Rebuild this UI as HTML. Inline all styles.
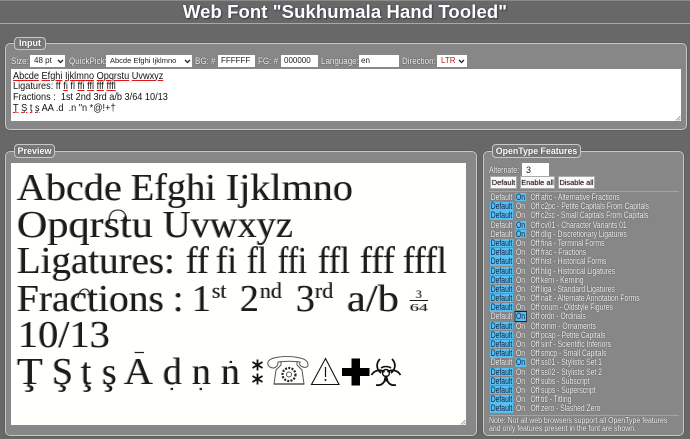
<!DOCTYPE html>
<html><head><meta charset="utf-8"><title>Web Font</title>
<style>
html{background:#686868}
html,body{margin:0;padding:0;width:690px;height:439px;overflow:hidden}
body{position:relative;font-family:"Liberation Sans",sans-serif;color:#eee;background:#686868;filter:blur(.2px)}
.a{position:absolute;white-space:nowrap}
.line{position:absolute;left:0;width:690px;background:#a8a8a4}
h1{position:absolute;left:0;top:1px;width:690px;margin:0;text-align:center;font-size:18.5px;line-height:22px;font-weight:bold;color:#fff;text-shadow:0 0 2px #223,0 0 2px #99a,1px 1px 1px #333;letter-spacing:.1px}
.fs{position:absolute;box-sizing:border-box;background:#878787;border:1px solid #c8c8c4;border-radius:5px;box-shadow:0 0 1px #333}
.lg{position:absolute;box-sizing:border-box;background:#787878;border:1px solid #c8c8c4;border-radius:4px;font-weight:bold;color:#fff;text-align:center;text-shadow:0 0 1px #333;white-space:nowrap}
.lb{position:absolute;font-size:8.800px;line-height:12px;color:#f4f4f4;text-shadow:0 0 1px #222;white-space:nowrap;transform:scaleX(.91);transform-origin:0 0}
.ctl{position:absolute;box-sizing:border-box;background:#fff;border:0;margin:0;padding:0 0 0 3px;height:12px;font:8px/12px "Liberation Sans",sans-serif;color:#222;border-radius:0;appearance:none;-webkit-appearance:none;outline:0}
.chev{position:absolute}
.ta{position:absolute;left:11px;top:69px;width:670px;height:52px;background:#fff;box-sizing:border-box;color:#111;padding:0}
.ta div{position:absolute;left:2px;top:2.500px;font-size:10.3px;line-height:10.700px;white-space:pre;transform:scaleX(.89);transform-origin:0 0}
.ta u{text-decoration:underline;text-decoration-color:#e11;text-underline-offset:1px}
.btn{position:absolute;top:176px;height:13px;box-sizing:border-box;background:#fafafa;border:1px solid #aaa;font-size:7.400px;line-height:11px;color:#111;text-align:center;padding:0;margin:0;font-family:"Liberation Sans",sans-serif;text-shadow:0 0 1px #b88;white-space:nowrap}
.hr{position:absolute;left:489px;width:190px;height:1px;background:#a4a4a2}
#rows{position:absolute;left:490px;top:193px;width:245px;font-size:8.800px;color:#f6f6f6;text-shadow:0 0 1px #222;transform:scaleX(.77);transform-origin:0 0}
.r{position:relative;height:9.2px;line-height:9.2px;white-space:nowrap}
.r span{position:absolute;top:0;height:8.4px;line-height:8.4px}
.d{left:0;width:29.900px;text-align:center}
.n{left:32.500px;width:14.300px;text-align:center}
.f{left:50.600px;width:15.600px;text-align:center}
.t{left:66.200px}
.s{background:#58bff0;color:#124;text-shadow:none}
.fo{outline:1px solid #123}
#pv{position:absolute;left:11px;top:163px;width:455px;height:262px;background:#fffffc}
</style></head><body>
<div class="line" style="top:0;height:1px;background:#8a8a86"></div>
<h1>Web Font "Sukhumala Hand Tooled"</h1>
<div class="line" style="top:23px;height:1px"></div>

<div class="fs" style="left:5px;top:43px;width:682px;height:87px"></div>
<div class="lg" style="left:14px;top:37px;width:32px;height:13px;font-size:9px;line-height:11px">Input</div>
<div class="lb" style="left:11px;top:55px">Size:</div>
<select class="ctl" style="left:30px;top:55px;width:35px;padding-left:4px"><option>48 pt</option></select>
<div class="lb" style="left:69px;top:55px">QuickPick:</div>
<select class="ctl" style="left:106px;top:55px;width:86px;padding-left:4px;font-size:7.500px"><option>Abcde Efghi Ijklmno</option></select>
<div class="lb" style="left:195px;top:55px">BG: #</div>
<input class="ctl" style="left:218px;top:55px;width:37px" value="FFFFFF">
<div class="lb" style="left:258px;top:55px">FG: #</div>
<input class="ctl" style="left:281px;top:55px;width:37px" value="000000">
<div class="lb" style="left:321px;top:55px">Language:</div>
<input class="ctl" style="left:359px;top:55px;width:40px;padding-left:2px" value="en">
<div class="lb" style="left:402px;top:55px">Direction:</div>
<select class="ctl" style="left:437px;top:55px;width:30px;color:#a22;padding-left:4px"><option>LTR</option></select>
<svg class="chev" style="left:0;top:0" width="690" height="200" fill="none" stroke="#222" stroke-width="1.3"><path d="M58 60l2.500 2.500 2.500-2.500M185 60l2.500 2.500 2.500-2.500M459 60l2.500 2.500 2.500-2.500M541 168l2.500 2.500 2.500-2.500"/></svg>
<div class="ta"><div><u>Abcde</u> <u>Efghi</u> <u>Ijklmno</u> <u>Opqrstu</u> <u>Uvwxyz</u>
Ligatures: ff <u>fi</u> fl <u>ffi</u> <u>ffl</u> <u>fff</u> <u>fffl</u>
Fractions :  1st 2nd 3rd a/b 3/64 10/13
<u>Ţ</u> <u>Ş</u> <u>ţ</u> <u>ş</u> AA .d  .n "n *@!+†</div></div>
<svg class="a" style="left:675px;top:115px" width="6" height="6" stroke="#888" stroke-width=".8"><path d="M1 5.500L5.500 1M3.500 5.500L5.500 3.500"/></svg>

<div class="fs" style="left:5px;top:151px;width:472px;height:285px"></div>
<div class="lg" style="left:14px;top:144px;width:41px;height:14px;font-size:9px;line-height:12px">Preview</div>
<div id="pv"></div>
<svg class="a" style="left:0;top:0" width="480" height="439" font-family="'Liberation Serif',serif" font-size="38" fill="#1c1c1c">
<defs><filter id="ht" x="-2%" y="-5%" width="104%" height="110%"><feOffset in="SourceAlpha" dx="-1.1" dy="0" result="o"/><feFlood flood-color="#a8a8a8"/><feComposite in2="o" operator="in" result="s"/><feMerge><feMergeNode in="s"/><feMergeNode in="SourceGraphic"/></feMerge></filter></defs>
<g filter="url(#ht)">
<text x="17" y="200" textLength="105" lengthAdjust="spacingAndGlyphs">Abcde</text>
<text x="131" y="200" textLength="85" lengthAdjust="spacingAndGlyphs">Efghi</text>
<text x="226" y="200" textLength="127" lengthAdjust="spacingAndGlyphs">Ijklmno</text>
<text x="17" y="237" textLength="136" lengthAdjust="spacingAndGlyphs">Opqrstu</text>
<text x="163" y="237" textLength="130" lengthAdjust="spacingAndGlyphs">Uvwxyz</text>
<path d="M110 224c-2-9 2-14 8-14s10 5 8 14" fill="none" stroke="#1c1c1c" stroke-width="1"/>
<text x="17" y="273" textLength="158" lengthAdjust="spacingAndGlyphs">Ligatures:</text>
<text x="186" y="273" textLength="23" lengthAdjust="spacingAndGlyphs">ff</text>
<text x="216" y="273" textLength="21" lengthAdjust="spacingAndGlyphs">fi</text>
<text x="247" y="273" textLength="20" lengthAdjust="spacingAndGlyphs">fl</text>
<text x="278" y="273" textLength="29" lengthAdjust="spacingAndGlyphs">ffi</text>
<text x="318" y="273" textLength="32" lengthAdjust="spacingAndGlyphs">ffl</text>
<text x="360" y="273" textLength="35" lengthAdjust="spacingAndGlyphs">fff</text>
<text x="403" y="273" textLength="44" lengthAdjust="spacingAndGlyphs">fffl</text>
<text x="17" y="311" textLength="147" lengthAdjust="spacingAndGlyphs">Fractions</text>
<text x="173" y="311">:</text>
<path d="M78 298c1-6 4-9 7-9s5 3 5 9" fill="none" stroke="#1c1c1c" stroke-width="1"/>
<text x="192" y="311">1</text><text x="212" y="298" font-size="22">st</text>
<text x="240" y="311">2</text><text x="260" y="298" font-size="22">nd</text>
<text x="296" y="311">3</text><text x="315" y="298" font-size="22">rd</text>
<text x="347" y="311" textLength="52" lengthAdjust="spacingAndGlyphs">a/b</text>
<text x="416" y="298" font-size="12">3</text><path d="M410 300.500h18" stroke="#1c1c1c" stroke-width="1"/><text x="410" y="311" font-size="11" textLength="18" lengthAdjust="spacingAndGlyphs">64</text>
<text x="18" y="347" textLength="92" lengthAdjust="spacingAndGlyphs">10/13</text>
<text x="17" y="384" textLength="26" lengthAdjust="spacingAndGlyphs">Ţ</text><text x="52" y="384">Ş</text><text x="81" y="384">ţ</text><text x="102" y="384">ş</text>
<text x="124" y="384" textLength="29" lengthAdjust="spacingAndGlyphs">A</text><path d="M135 352.500h9" stroke="#1c1c1c" stroke-width="1.2"/>
<text x="163" y="384">d</text><circle cx="172" cy="389" r="1.2"/>
<text x="192" y="384">n</text><circle cx="201" cy="389" r="1.2"/>
<text x="221" y="384">n</text><circle cx="231" cy="362" r="1.2"/>
</g>
<g stroke="#111" stroke-width="1.8" fill="none">
<path d="M257.500 359.500v11M252.500 362l10 6M262.500 362l-10 6M257.500 373.500v11M252.500 376l10 6M262.500 376l-10 6"/>
</g>
<g fill="none" stroke="#555" stroke-width="1">
<path d="M268 365c-1-4 2-6 6-7 8-2 18-2 26 0 5 1 8 3 8 7 0 2-3 3-5 2-3-1-4-2-3-5-7-1-15-1-22 0 0 3-1 5-4 6-3 0-5-1-6-3z"/>
<path d="M281 361v4l-5 5-2 14h30l-2-14-5-5v-4"/>
<path d="M274 384h30" stroke-width="1.4"/>
<circle cx="289" cy="374.500" r="6.500" stroke="#222" stroke-width="2.200" stroke-dasharray="2 1.300"/>
<circle cx="289" cy="374.500" r="2.500"/>
</g>
<path d="M325.500 358.500L339 384.500H311.500Z" fill="none" stroke="#111" stroke-width="1.100"/>
<path d="M325.500 367v10" stroke="#111" stroke-width="1.200"/><circle cx="325.500" cy="380" r="1" fill="#111" stroke="none"/>
<path d="M351.500 358.500h8.500v9.500h9.500v8h-9.500v9.500h-8.500v-9.500h-9.500v-8h9.500z" fill="#000" stroke="none"/>
<g fill="none" stroke="#111">
<path d="M380 359c-4 4-4 10 1 14M392 359c4 4 4 10-1 14" stroke-width="1.800"/>
<path d="M371.500 375c3-5 9-6 13-3M400.500 375c-3-5-9-6-13-3" stroke-width="1.800"/>
<path d="M376 385c5 1 9-2 9-7M396 385c-5 1-9-2-9-7" stroke-width="1.800"/>
<circle cx="386" cy="373" r="3.500" stroke-width="1.400"/>
<path d="M381 368c3-2 7-2 10 0" stroke-width="1.400"/>
<path d="M386 375.500v6" stroke-width="3"/>
</g>
</svg>
<svg class="a" style="left:460px;top:419px" width="6" height="6" stroke="#888" stroke-width=".8"><path d="M1 5.500L5.500 1M3.500 5.500L5.500 3.500"/></svg>

<div class="fs" style="left:483px;top:151px;width:201px;height:285px"></div>
<div class="lg" style="left:492px;top:144px;width:89px;height:14px;font-size:8.800px;line-height:12px">OpenType Features</div>
<div class="lb" style="left:489px;top:164px;transform:scaleX(.8)">Alternate:</div>
<select class="ctl" style="left:522px;top:163px;width:27px;height:13px;font-size:9px;padding-left:4px"><option>3</option></select>
<button class="btn" style="left:490px;width:27px">Default</button>
<button class="btn" style="left:520px;width:35px">Enable all</button>
<button class="btn" style="left:558px;width:37px">Disable all</button>
<div class="hr" style="top:191px"></div>
<div id="rows">
<div class="r"><span class="d">Default</span><span class="n s">On</span><span class="f">Off</span><span class="t">afrc - Alternative Fractions</span></div>
<div class="r"><span class="d s">Default</span><span class="n">On</span><span class="f">Off</span><span class="t">c2pc - Petite Capitals From Capitals</span></div>
<div class="r"><span class="d s">Default</span><span class="n">On</span><span class="f">Off</span><span class="t">c2sc - Small Capitals From Capitals</span></div>
<div class="r"><span class="d">Default</span><span class="n s">On</span><span class="f">Off</span><span class="t">cv01 - Character Variants 01</span></div>
<div class="r"><span class="d">Default</span><span class="n s">On</span><span class="f">Off</span><span class="t">dlig - Discretionary Ligatures</span></div>
<div class="r"><span class="d s">Default</span><span class="n">On</span><span class="f">Off</span><span class="t">fina - Terminal Forms</span></div>
<div class="r"><span class="d s">Default</span><span class="n">On</span><span class="f">Off</span><span class="t">frac - Fractions</span></div>
<div class="r"><span class="d s">Default</span><span class="n">On</span><span class="f">Off</span><span class="t">hist - Historical Forms</span></div>
<div class="r"><span class="d s">Default</span><span class="n">On</span><span class="f">Off</span><span class="t">hlig - Historical Ligatures</span></div>
<div class="r"><span class="d s">Default</span><span class="n">On</span><span class="f">Off</span><span class="t">kern - Kerning</span></div>
<div class="r"><span class="d s">Default</span><span class="n">On</span><span class="f">Off</span><span class="t">liga - Standard Ligatures</span></div>
<div class="r"><span class="d s">Default</span><span class="n">On</span><span class="f">Off</span><span class="t">nalt - Alternate Annotation Forms</span></div>
<div class="r"><span class="d s">Default</span><span class="n">On</span><span class="f">Off</span><span class="t">onum - Oldstyle Figures</span></div>
<div class="r"><span class="d">Default</span><span class="n s fo">On</span><span class="f">Off</span><span class="t">ordn - Ordinals</span></div>
<div class="r"><span class="d s">Default</span><span class="n">On</span><span class="f">Off</span><span class="t">ornm - Ornaments</span></div>
<div class="r"><span class="d s">Default</span><span class="n">On</span><span class="f">Off</span><span class="t">pcap - Petite Capitals</span></div>
<div class="r"><span class="d s">Default</span><span class="n">On</span><span class="f">Off</span><span class="t">sinf - Scientific Inferiors</span></div>
<div class="r"><span class="d s">Default</span><span class="n">On</span><span class="f">Off</span><span class="t">smcp - Small Capitals</span></div>
<div class="r"><span class="d">Default</span><span class="n s">On</span><span class="f">Off</span><span class="t">ss01 - Stylistic Set 1</span></div>
<div class="r"><span class="d s">Default</span><span class="n">On</span><span class="f">Off</span><span class="t">ss02 - Stylistic Set 2</span></div>
<div class="r"><span class="d s">Default</span><span class="n">On</span><span class="f">Off</span><span class="t">subs - Subscript</span></div>
<div class="r"><span class="d s">Default</span><span class="n">On</span><span class="f">Off</span><span class="t">sups - Superscript</span></div>
<div class="r"><span class="d s">Default</span><span class="n">On</span><span class="f">Off</span><span class="t">titl - Titling</span></div>
<div class="r"><span class="d s">Default</span><span class="n">On</span><span class="f">Off</span><span class="t">zero - Slashed Zero</span></div>
</div>
<div class="hr" style="top:415px"></div>
<div class="a" style="left:489px;top:417px;font-size:8px;line-height:7.500px;color:#f6f6f6;text-shadow:0 0 1px #222;transform:scaleX(.87);transform-origin:0 0">Note: Not all web browsers support all OpenType features<br>and only features present in the font are shown.</div>
</body></html>
